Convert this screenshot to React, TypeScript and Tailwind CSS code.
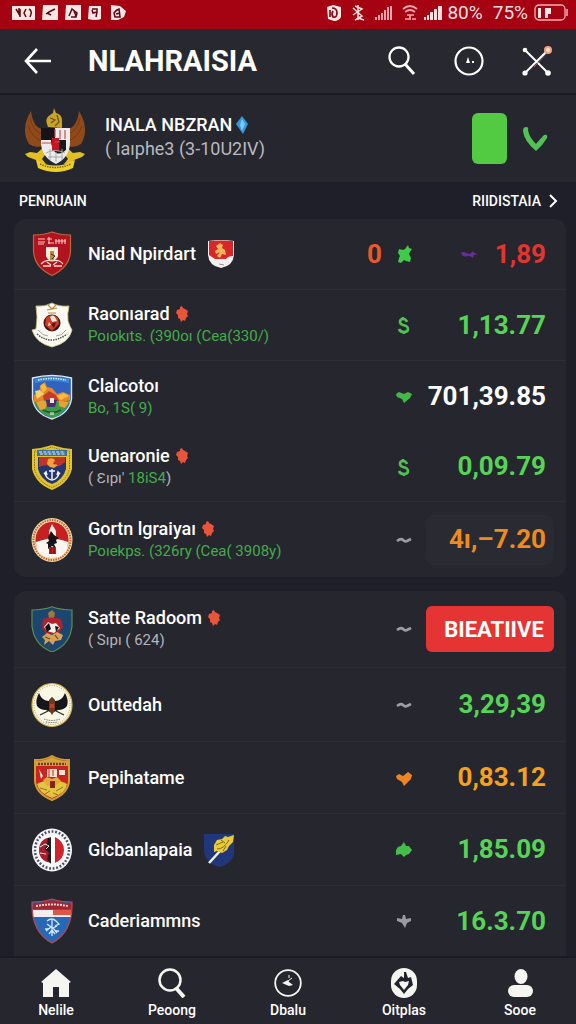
import React from 'react';

type Tone = 'red' | 'green' | 'white' | 'orange' | 'amber';

interface Club {
  name: string;
  crest: React.FC;
  detail?: React.ReactNode;
  pin?: boolean;
  flag?: React.FC;
  count?: string;
  mark: React.FC;
  extra?: React.FC;
  value: string;
  tone: Tone;
  variant?: 'badge' | 'boxed';
  height: string;
}

const tones: Record<Tone, string> = {
  red: 'text-[#e2352f]',
  green: 'text-[#55d455]',
  white: 'text-white',
  orange: 'text-[#f08a1d]',
  amber: 'text-[#f7a11b]',
};

/* ---------- crests ---------- */

const Crest = ({ children }: { children: React.ReactNode }) => (
  <svg viewBox="0 0 42 46" className="h-[46px] w-[42px] shrink-0" aria-hidden="true">
    {children}
  </svg>
);

const RedShield = () => (
  <Crest>
    <path d="M2.500 4Q13 4 21 1Q29 4 39.500 4V20Q39 36 21 44.500Q3 36 2.500 20Z" fill="#b3131f" stroke="#b9683b" strokeWidth="1.200" />
    <path d="M7 8h7M7 11h7M7 13h6M18 6v7M16 8h5M17 12h6M25 8v5M28 8v5M31 8v5M34 8v5M24 10h11" stroke="#f3c9c4" strokeWidth="1.100" />
    <path d="M15 16h12v9q-1 4-6 5q-5-1-6-5z" fill="#f5ecdc" />
    <path d="M19 20h4v9h-4z" fill="#b98a3c" />
    <path d="M20 23l4 2-3 3" stroke="#4c2914" fill="none" />
    <path d="M10 33q5-5 11-3q7-2 11 3M12 35h8M23 35h8M16 31l4 3M26 31l-4 3" fill="none" stroke="#f5dcc9" strokeWidth="1.300" />
  </Crest>
);

const WhiteShield = () => (
  <Crest>
    <path d="M5 4Q14 5 21 1Q28 5 38 4Q36 12 37 19Q39 25 41 28Q38 41 21 45Q5 41 1 28L5 27Q7 15 5 4Z" fill="#fbfaf2" stroke="#d7c77c" strokeWidth=".8" />
    <path d="M17 3l4 4 4-4M16 8l10-2M17 11h8" stroke="#b78b3c" fill="none" strokeWidth="1.200" />
    <circle cx="21" cy="21" r="8.500" fill="#3b1a1e" />
    <path d="M15 16q6-6 12 0l1 6-7 7-7-6z" fill="#d33b25" />
    <path d="M19 15q3-3 5 0l2 4-5 1zM18 20l2 3-3 1z" fill="#f3e9d5" />
    <path d="M20 22l5-2-2 6z" fill="#5a1112" />
    <path d="M6 32q14 12 30 0" fill="none" stroke="#555" strokeWidth="1.500" strokeDasharray="1.500 1" />
    <path d="M7 28q5 6 10 6M35 28q-4 6-10 6" fill="none" stroke="#8c8c86" strokeWidth=".8" />
  </Crest>
);

const LandscapeShield = () => (
  <Crest>
    <path d="M1.500 4Q21-1 40.500 4V25Q38 40 21 45Q4 40 1.500 25Z" fill="#2f63c0" stroke="#dbe7f0" strokeWidth="1.400" />
    <path d="M4 5Q21 1 38 5V9Q21 5 4 9Z" fill="#3c8bd0" />
    <path d="M7 6Q21 3 35 6" stroke="#d7ecff" strokeWidth="1.500" strokeDasharray="1.500 1" fill="none" />
    <path d="M3 21l5-4 2-6 4-3 2 5 5 1 5 6 6-2 7 3v9H3z" fill="#e9832c" />
    <path d="M9 12l4-3 3 6-4 4zM25 22l8-3 5 3-8 4z" fill="#f2bc3f" />
    <path d="M12 22l6-5 7 4 3 6H13z" fill="#c23a2b" />
    <path d="M4 17l5-1 4 4-7 5z" fill="#f4d36c" />
    <path d="M3 28q8-3 18-1t18-1Q36 39 21 44Q7 39 3 28Z" fill="#3f9b47" />
    <path d="M5 28l7-2 5 3-3 6-5 1zM28 27l10 1-4 6-6-2z" fill="#e8a133" />
    <path d="M15 26h11l-2 7h-8z" fill="#452f74" />
    <path d="M19 24h4v5h-4z" fill="#efe6d0" />
    <path d="M12 36q9 5 18 0" stroke="#1c5e2b" strokeWidth="2" fill="none" />
    <path d="M20 38v3M22 38v3" stroke="#fff" strokeWidth="1" />
  </Crest>
);

const GoldShield = () => (
  <Crest>
    <path d="M1 5Q12 4 21 1Q30 4 41 5V25Q37 40 21 46Q5 40 1 25Z" fill="#e2c32c" />
    <path d="M3.500 7Q13 6 21 3Q29 6 38.500 7V25Q35 38 21 43.500Q7 38 3.500 25Z" fill="none" stroke="#87701a" strokeWidth="1" strokeDasharray="1.500 1" />
    <path d="M7 13h28v12Q32 36 21 40Q10 36 7 25Z" fill="#24366f" />
    <path d="M8 13h26v5q-6 6-13 4T8 23z" fill="#c23327" />
    <path d="M6 6h30v6H6z" fill="#3873a8" />
    <path d="M8 8h26M9 10h25" stroke="#e8f0e8" strokeWidth="1" strokeDasharray="3 1.300" />
    <path d="M17 15q5-2 7 1l-2 4 5 1-4 3-4-1-3-3z" fill="#f0a33a" />
    <path d="M21 25v10M18 27h6M14 29q1 6 7 7q6-1 7-7M13 30l2-2 1 3M29 30l-2-2-1 3" stroke="#f4f4f4" strokeWidth="1.500" fill="none" />
  </Crest>
);

const RedRound = () => (
  <Crest>
    <ellipse cx="21" cy="23" rx="20.500" ry="22" fill="#f1d9a4" />
    <ellipse cx="21" cy="23" rx="18.500" ry="20" fill="none" stroke="#c0652d" strokeWidth="2" strokeDasharray="1.500 1" />
    <ellipse cx="21" cy="23" rx="16.500" ry="18" fill="#c71f22" />
    <path d="M5 25q6-2 11-3l5-3 5 3q6 1 11 3q0 16-16 16T5 25z" fill="#fbf7f0" />
    <path d="M21 7l4 7v6h-7v-6z" fill="#f7ede4" />
    <path d="M18 18l2-4 3 4 5 3-3 2 1 3-3 1 2 4-4-2-4 3v-5l-2-1 3-2-1-3z" fill="#15151a" />
    <path d="M18 30h7v7h-7z" fill="#c71f22" />
    <path d="M20 30v7M23 30v7" stroke="#5d0c10" />
  </Crest>
);

const BlueShield = () => (
  <Crest>
    <path d="M1 4Q12 4 21 .8Q30 4 41 4V20Q39 39 21 46Q3 39 1 20Z" fill="#1b4672" stroke="#5f8d44" strokeWidth="1.200" />
    <path d="M21 4l3 3-1 5h-5l-1-5z" fill="#a47836" />
    <path d="M12 13q9-3 18 0l2 8-5 7H15l-4-7z" fill="#b3202c" />
    <path d="M17 16l4 2 4-1 4 5-6 5-7-2-3-4z" fill="#f3eee6" />
    <path d="M18 17l2 6-4 3-2-5zM24 20l4 1-3 5z" fill="#111219" />
    <path d="M11 31l5-4 5 2 5-3 6 3-2 5-6 1-2 4-4-4-5 4 1-5z" fill="#d7a158" />
    <path d="M14 31l5 2M24 29l3 4M19 37l-2 4" stroke="#704522" strokeWidth="1.200" />
  </Crest>
);

const GarudaRound = () => (
  <Crest>
    <ellipse cx="21" cy="23" rx="20" ry="21.500" fill="#faf7e6" stroke="#d2b44f" strokeWidth="1.200" />
    <ellipse cx="21" cy="23" rx="18" ry="19.500" fill="none" stroke="#b59d53" strokeWidth="1" strokeDasharray="1 1.500" />
    <path d="M8 11q3 8 10 8l3-4 3 4q7 0 10-8q4 7 2 13q-3 4-9 4l-6 3-6-3q-6 0-9-4q-2-6 2-13z" fill="#17161b" />
    <path d="M18 18l3-3 3 3v10l-3 5-3-5z" fill="#6f3a1c" />
    <path d="M19 22h4v4h-4z" fill="#c83b26" />
    <path d="M9 33l8-4M33 33l-8-4" stroke="#2b2925" strokeWidth="1.300" fill="none" />
    <path d="M13 37q8 3 16 0M15 40q6 1 12 0" stroke="#6e6a58" fill="none" strokeDasharray="1 .7" />
  </Crest>
);

const RedGoldShield = () => (
  <Crest>
    <path d="M4 5Q14 5 21 1Q28 5 38 5V25Q38 38 21 45Q4 38 4 25Z" fill="#c92420" stroke="#cf9c35" strokeWidth="2" />
    <path d="M5 6Q14 6 21 2Q28 6 37 6V11H5Z" fill="#d5a23c" />
    <path d="M7 9h28" stroke="#6c431c" strokeWidth="2.500" strokeDasharray="2 1" />
    <path d="M8 14l4 7-2 3zM16 14h10v8H16zM28 15h6v5h-6z" fill="#f4e3d0" />
    <path d="M18 14v8M22 15v6" stroke="#bf2620" />
    <path d="M6 29q15-8 30 0q-1 9-15 14Q8 38 6 29z" fill="#e2c541" />
    <path d="M12 25l4-3 5 2 5-2 4 4-6 5H16z" fill="#e8a83a" />
    <path d="M19 26h5v7h-5z" fill="#7e2a17" />
    <path d="M9 33l7 2M32 32l-7 4M14 39l5-3M22 38l5 2" stroke="#967222" />
  </Crest>
);

const StripeRound = () => (
  <Crest>
    <ellipse cx="21" cy="23" rx="20" ry="21.500" fill="#f6f5f6" />
    <ellipse cx="21" cy="23" rx="17" ry="18.500" fill="none" stroke="#4a4d6c" strokeWidth="2.500" strokeDasharray="1.800 1.800" />
    <ellipse cx="21" cy="23" rx="13.500" ry="14.500" fill="#fff" />
    <path d="M20 10v26Q8 34 8 23T20 10z" fill="#a51d29" />
    <path d="M17 11h3v26l-4-5 2-6-4-4 2-5z" fill="#1d1a20" />
    <path d="M9 20l5-3 4 2-3 3M9 26l6 1" stroke="#eee" fill="none" />
    <path d="M24 10q9 4 9 13T24 36z" fill="#cf242d" />
  </Crest>
);

const BannerShield = () => (
  <Crest>
    <path d="M1 4Q13 4 21 1Q29 4 41 4Q42 34 21 45Q0 34 1 4Z" fill="#2769b8" stroke="#b9474b" strokeWidth="1.200" />
    <path d="M2 5Q13 5 21 2Q29 5 40 5V11H2Z" fill="#9e2732" />
    <path d="M5 8Q21 5 37 8" stroke="#f1d4cf" strokeWidth="2" strokeDasharray="2 1" fill="none" />
    <path d="M2 12h38l-.5 7H2.500z" fill="#f6eeee" />
    <path d="M22 12h18v5H22z" fill="#df5648" />
    <path d="M16 23q5-4 9 0l3 3-4 2M21 22v16M16 26l4 3-5 4M26 28l-4 2 4 5M18 36l3-4 3 4M14 31h4M24 33h4" stroke="#d4e9ff" strokeWidth="1.300" fill="none" />
  </Crest>
);

const NationalCrest = () => (
  <svg viewBox="0 0 62 66" className="h-[66px] w-[62px] shrink-0" aria-hidden="true">
    <path d="M7 5Q9 21 18 23L22 38Q14 44 5 38Q-4 23 7 5ZM55 5Q53 21 44 23L40 38Q48 44 57 38Q66 23 55 5Z" fill="#8f4a1c" />
    <path d="M6 12q3 14 13 16M4 20q5 13 15 15M56 12q-3 14-13 16M58 20q-5 13-15 15" fill="none" stroke="#76390f" strokeWidth="1" />
    <path d="M24 21q-4-9 2-12l3-2 1-5 2 5q6 1 6 8v7z" fill="#c8a32c" />
    <path d="M26 12l5 2-4 3M33 9l2 7-4 4" fill="none" stroke="#715514" strokeWidth="1.300" />
    <path d="M1 48l5-2 7 1 8-7 3 5-6 8 4 5-6 3-4-7-8-3zM61 48l-5-2-7 1-8-7-3 5 6 8-4 5 6 3 4-7 8-3z" fill="#e1bf24" />
    <path d="M17 22h29v14q0 15-14 22Q17 51 17 36z" fill="#ececec" />
    <path d="M17 22h14v12H17z" fill="#15141a" />
    <path d="M27 34h15v10q-5 5-10 3-5-4-5-13z" fill="#1a191e" />
    <path d="M28 32h7v13h-7z" fill="#c31623" />
    <path d="M31 23v8M36 24v9M41 24v9M18 37h9M31 36h5" stroke="#c74b50" strokeWidth="1.200" />
    <path d="M22 47q9-5 19 0M24 51h15M32 46v10M26 43v11M38 43v11" stroke="#aaa" fill="none" />
    <path d="M12 54q19 11 39 0l-2 8q-17 8-35 0z" fill="#efcf2c" />
    <path d="M16 58q15 7 31 0" stroke="#806618" strokeWidth="1.500" strokeDasharray="1.500 1" fill="none" />
  </svg>
);

/* ---------- small marks ---------- */

const Pin = () => (
  <svg viewBox="0 0 12 16" className="h-4 w-3 shrink-0" aria-hidden="true">
    <path d="M4 1l2-1 1 2 2 1 3 2-1 3 1 2-2 2-1 3-2-1-2 2-1-3-2-1V9L0 7l1-3 3-1z" fill="#e9553a" />
  </svg>
);

const MiniFlag = () => (
  <svg viewBox="0 0 26 28" className="h-7 w-[26px] shrink-0" aria-hidden="true">
    <path d="M0 1q13-2 26 0v14q-1 11-13 13Q1 26 0 15z" fill="#f5f1ef" />
    <path d="M1 1q12-1 24 0v15q-5 0-7 3H7l-6-4z" fill="#d9262b" />
    <path d="M12 3l3 2-1 3 3 2 1 5-4-1-2 4-3-2 3-4-4 2-1-3 3-2-2-3z" fill="#efb45c" />
    <path d="M11 24l5 1" stroke="#a88" />
  </svg>
);

const FeatherFlag = () => (
  <svg viewBox="0 0 30 34" className="h-[34px] w-[30px] shrink-0" aria-hidden="true">
    <path d="M0 1h30v20q-2 9-14 13Q1 30 0 18z" fill="#20377c" />
    <path d="M5 30L16 18" stroke="#f3f3ee" strokeWidth="2.500" />
    <path d="M10 12l3-5 5-1 3-3 3 1 6-2-1 7-4 4-2 4-5 3-5-2-3 1z" fill="#e9cb35" />
    <path d="M12 12l7-3M13 16q7 0 12-9M19 18l3-5M17 7l4 3" stroke="#806c22" fill="none" />
  </svg>
);

const Mark = ({ children }: { children: React.ReactNode }) => (
  <svg viewBox="0 0 20 20" className="h-5 w-5 shrink-0" aria-hidden="true">
    {children}
  </svg>
);

const Burst = () => (
  <Mark><path d="M5 5l4 1 2-1 3-4 1 3 3 1-2 3-1 2 2 4-1 4-4-1-2-1-3 3-3-1 1-4 1-2-2-3z" fill="#3fca48" /></Mark>
);
const Dollar = () => (
  <Mark><path d="M13 7q-1-3-4-3q-3 0-3 3q0 2 3 3q5 1 5 4q0 3-4 3q-4 0-5-3M9 2v2M10 17v2" fill="none" stroke="#4fc24f" strokeWidth="2.600" /></Mark>
);
const Heart = () => (
  <Mark><path d="M2 7l3-2 5 2 4-2 4 2-2 4-6 5-2-4-5-2z" fill="#42b84a" /></Mark>
);
const OrangeHeart = () => (
  <Mark><path d="M2 8l3-2 4 2 5-4 4 3-1 4-7 7-2-4-5-3z" fill="#ec8524" /></Mark>
);
const Clover = () => (
  <Mark><path d="M7 6l3-4 2 4 3 0 3 4-3 4-3 1-2 2-3-3-5 1v-5l2-3z" fill="#45bd4b" /></Mark>
);
const Plus = () => (
  <Mark><path d="M9 4h2l1 4 5-1v3l-4 2-2 5-3-5-5-2V7l5 1z" fill="#9a9aa0" /></Mark>
);
const Wave = () => (
  <Mark><path d="M3 11q4-3 6-1t4 1l4-2" fill="none" stroke="#9c9ca3" strokeWidth="2.600" /></Mark>
);
const PurpleBar = () => (
  <Mark><path d="M2 9q3-2 5 0l4 1 3-3 1 2 4 1-4 1-1 3-3-2H8q-4 2-6-3z" fill="#6a2c9c" /></Mark>
);

/* ---------- data ---------- */

const groups: Club[][] = [
  [
    { name: 'Niad Npirdart', crest: RedShield, flag: MiniFlag, count: '0', mark: Burst, extra: PurpleBar, value: '1,89', tone: 'red', height: 'min-h-[71px]' },
    { name: 'Raonıarad', crest: WhiteShield, pin: true, detail: 'Poıokıts. (390oı (Cea(330/)', mark: Dollar, value: '1,13.77', tone: 'green', height: 'min-h-[71px]' },
    { name: 'Clalcotoı', crest: LandscapeShield, detail: 'Bo, 1S( 9)', mark: Heart, value: '701,39.85', tone: 'white', height: 'min-h-[71px]' },
    {
      name: 'Uenaronie', crest: GoldShield, pin: true,
      detail: <><span className="text-[#b4b4ba]">( Ɛıpı&apos;</span> 18iS4<span className="text-[#b4b4ba]">)</span></>,
      mark: Dollar, value: '0,09.79', tone: 'green', height: 'min-h-[70px]',
    },
    { name: 'Gortn lgraiyaı', crest: RedRound, pin: true, detail: 'Poıekps. (326ry (Cea( 3908y)', mark: Wave, value: '4ı,–7.20', tone: 'orange', variant: 'boxed', height: 'min-h-[75px]' },
  ],
  [
    {
      name: 'Satte Radoom', crest: BlueShield, pin: true,
      detail: <span className="text-[#b4b4ba]">( Sıpı ( 624)</span>,
      mark: Wave, value: 'BIEATIIVE', tone: 'white', variant: 'badge', height: 'min-h-[77px]',
    },
    { name: 'Outtedah', crest: GarudaRound, mark: Wave, value: '3,29,39', tone: 'green', height: 'min-h-[74px]' },
    { name: 'Pepihatame', crest: RedGoldShield, mark: OrangeHeart, value: '0,83.12', tone: 'amber', height: 'min-h-[72px]' },
    { name: 'Glcbanlapaia', crest: StripeRound, flag: FeatherFlag, mark: Clover, value: '1,85.09', tone: 'green', height: 'min-h-[72px]' },
    { name: 'Caderiammns', crest: BannerShield, mark: Plus, value: '16.3.70', tone: 'green', height: 'min-h-[70px]' },
  ],
];

const ClubRow = ({ club }: { club: Club }) => {
  const { crest: ClubCrest, flag: Flag, mark: MarkIcon, extra: Extra } = club;
  return (
    <li className={`flex items-center pl-[17px] pr-3 ${club.height}`}>
      <ClubCrest />
      <div className={`ml-[15px] min-w-0 flex-1 whitespace-nowrap ${club.detail ? 'pb-0.5' : ''}`}>
        <div className="flex items-center">
          <span className="text-lg font-medium leading-6 text-white">{club.name}</span>
          {club.pin && <span className="ml-1.5"><Pin /></span>}
          {Flag && <span className="ml-3"><Flag /></span>}
        </div>
        {club.detail && <p className="text-[15px] leading-5 text-[#43ad4a]">{club.detail}</p>}
      </div>
      {club.count && <span className="mr-3 text-[26px] font-bold leading-8 text-[#ea5a26]">{club.count}</span>}
      <MarkIcon />
      {club.variant === 'badge' ? (
        <button className="ml-3 h-[46px] w-32 rounded-md bg-[#e53434] pl-2 text-[22px] font-bold text-white">{club.value}</button>
      ) : (
        <div
          className={`ml-3 flex w-32 items-center justify-end gap-4 rounded-lg pr-2 text-[26px] font-bold ${tones[club.tone]} ${
            club.variant === 'boxed' ? 'h-[50px] bg-[#2a2a32]' : ''
          }`}
        >
          {Extra && <Extra />}
          <span>{club.value}</span>
        </div>
      )}
    </li>
  );
};

/* ---------- status bar ---------- */

const StatusBar = () => (
  <div className="flex h-[29px] items-center justify-between bg-[#a50311] pb-1 pl-3 pr-2 text-[#f9dfe0]">
    <svg viewBox="0 0 116 18" className="h-[18px] w-[116px]" aria-hidden="true">
      <path d="M0 2h23v14H0zM31 1h15v15H30zM54 1h15v15H53zM77 2h12v13q-5 2-13 0zM99 1l9 1 6 5-2 6-6 3H99z" fill="#fbe6e6" />
      <path d="M4 5l3 5V4M8 5v8M14 5l-2 4 2 4M17 5q4 2 1 8M34 10l3-2 6-3M35 9l4 2M57 12l3-7 5 4-1 4h-5M62 7l2 5M80 5h5v3l-4 1-1-3M85 8l-1 5M102 9q2-3 5-4l1 8h-5zM104 10l4-1" fill="none" stroke="#5e0710" strokeWidth="1.500" />
    </svg>
    <div className="flex items-center">
      <svg viewBox="0 0 118 18" className="mr-1 h-[18px] w-[118px]" aria-hidden="true">
        <path d="M2 3l6-2 8 2v10q-2 4-7 4l-6-2z" fill="#fbe6e6" />
        <path d="M7 4q5 0 5 5t-4 4q-2-3 0-6M5 6v7" stroke="#8d0610" strokeWidth="1.700" fill="none" />
        <path d="M33 1v15M28 4l9 8-7 4M28 11l9-6-7-3M33 14l6 2" stroke="#fbdfe0" strokeWidth="1.500" fill="none" />
        <path d="M51 13v3M54 11v5M57 9v7M60 6v10M63 3v13M66 2v14" stroke="#f4bfc2" strokeWidth="1.700" />
        <path d="M78 5q7-6 14 0M80 8q5-4 10 0M82 11h7M85 11v5M80 15h4M87 15h4" stroke="#efa6aa" strokeWidth="1.700" fill="none" />
        <path d="M99 16V13h2v3zM102 16v-5h2v5zM105 16V8h3v8zM109 16V5h3v11zM113 16V2h4v14z" fill="#fbdfe0" />
      </svg>
      <span className="text-[19px] leading-6">80%</span>
      <span className="ml-2.5 text-[19px] leading-6">75%</span>
      <svg viewBox="0 0 34 17" className="ml-1.5 h-[17px] w-[34px]" aria-hidden="true">
        <rect x="1" y="1" width="30" height="15" rx="4" fill="none" stroke="#f3b1b4" strokeWidth="1.300" />
        <path d="M33 5v7" stroke="#f3b1b4" strokeWidth="1.500" />
        <path d="M4 4h3v10H4zM11 4h6v6h-3v4h-3z" fill="#fbe6e6" />
      </svg>
    </div>
  </div>
);

/* ---------- bottom navigation ---------- */

const navItems = [
  {
    label: 'Nelile',
    icon: <path d="M15 1L30 14l-2 1v14H18V19h-6v10H2V15l-2-1z" fill="#f5f5f2" />,
  },
  {
    label: 'Peoong',
    icon: (
      <>
        <circle cx="13" cy="12" r="10.500" fill="none" stroke="#f5f5f2" strokeWidth="2.500" />
        <path d="M19 20l8 9" stroke="#f5f5f2" strokeWidth="4" />
      </>
    ),
  },
  {
    label: 'Dbalu',
    icon: (
      <>
        <circle cx="15" cy="15" r="12.800" fill="none" stroke="#f5f5f2" strokeWidth="1.800" />
        <path d="M16 7v3M19 10l-4 3" fill="none" stroke="#f5f5f2" strokeWidth="1" />
        <path d="M9 15l6-3 1 2 4 3-4 1z" fill="#f5f5f2" />
      </>
    ),
  },
  {
    label: 'Oitplas',
    icon: (
      <>
        <rect x="2" y="0" width="26" height="30" rx="13" fill="#f5f5f2" />
        <path d="M15 4v6l-3-2-7 8 6 5 4 5 4-5 5-4-2-8-3 1-2-6zM10 14l4-1 2 1 4-1-1 4-4 5-4-5z" fill="#22222a" fillRule="evenodd" />
      </>
    ),
  },
  {
    label: 'Sooe',
    icon: (
      <>
        <ellipse cx="16" cy="8.500" rx="6.500" ry="7.500" fill="#f5f5f2" />
        <rect x="3" y="17" width="25" height="12" rx="6" fill="#f5f5f2" />
      </>
    ),
  },
];

const App: React.FC = () => {
  return (
    <div className="flex min-h-screen flex-col bg-[#1f1f29] font-['Roboto',sans-serif] text-white">
      <StatusBar />

      {/* Title bar */}
      <header className="flex h-[66px] items-center border-b-2 border-[#1a1a22] bg-[#282830] pl-6 pr-6">
        <button aria-label="Back">
          <svg viewBox="0 0 28 26" className="h-[26px] w-7">
            <path d="M27 13H3M13 1L2 13l11 12" fill="none" stroke="#fff" strokeWidth="2.600" />
          </svg>
        </button>
        <h1 className="ml-9 flex-1 text-[29px] font-bold leading-10">NLAHRAISIA</h1>
        <div className="flex items-center gap-[38px]">
          <button aria-label="Search">
            <svg viewBox="0 0 28 30" className="h-[30px] w-7">
              <circle cx="11" cy="11" r="9.500" fill="none" stroke="#fff" strokeWidth="2.300" />
              <path d="M17 18l9 10" stroke="#fff" strokeWidth="3" />
            </svg>
          </button>
          <button aria-label="Activity">
            <svg viewBox="0 0 30 30" className="h-[30px] w-[30px]">
              <circle cx="15" cy="15" r="13.500" fill="none" stroke="#fff" strokeWidth="2.200" />
              <path d="M14 11l2 6h-4zM18 15h2v2h-2z" fill="#fff" />
            </svg>
          </button>
          <button aria-label="Tools">
            <svg viewBox="0 0 30 30" className="h-[30px] w-[30px]">
              <path d="M3 4l23 23M25 5L3 27" stroke="#fff" strokeWidth="2" />
              <path d="M12 21L24 8" stroke="#8a6a62" strokeWidth="1" />
              <circle cx="3" cy="4" r="2.300" fill="#fff" />
              <circle cx="3" cy="27" r="2.600" fill="#fff" />
              <circle cx="26" cy="27" r="2.800" fill="#fff" />
              <circle cx="26" cy="4" r="4" fill="#f6a27c" />
              <circle cx="26" cy="4" r="2" fill="#ffe3d2" />
            </svg>
          </button>
        </div>
      </header>

      {/* Profile */}
      <section className="flex h-[87px] items-center bg-[#26262f] pl-6 pr-7">
        <NationalCrest />
        <div className="ml-[19px] flex-1 whitespace-nowrap pb-1">
          <div className="flex items-center gap-1">
            <h2 className="text-lg font-medium leading-6">INALA NBZRAN</h2>
            <svg viewBox="0 0 12 18" className="h-[18px] w-3" aria-hidden="true">
              <path d="M6 0l6 8-5 10L0 8z" fill="#3597dc" />
              <path d="M6 3l3 5-3 7-2-6z" fill="#7cc8f5" />
            </svg>
          </div>
          <p className="text-lg leading-6 text-[#b9b9bf]">( Iaıphe3 (3-10U2IV)</p>
        </div>
        <button aria-label="Status" className="h-[51px] w-[35px] rounded-md bg-[#52cb43]" />
        <button aria-label="Expand" className="ml-4">
          <svg viewBox="0 0 25 25" className="h-[25px] w-[25px]">
            <path d="M3 1q3 0 2 3q1 7 8 14q4-5 8-9q4-1 3 3q-4 7-11 13Q1 15 0 5q0-4 3-4z" fill="#52c257" />
          </svg>
        </button>
      </section>

      <div className="flex h-[37px] items-center justify-between pl-[19px] pr-[18px] text-sm font-medium">
        <h3>PENRUAIN</h3>
        <a href="#all" className="flex items-center gap-2">
          RIIDISTAIA
          <svg viewBox="0 0 9 14" className="h-[14px] w-[9px]" aria-hidden="true">
            <path d="M1 1l6 6-6 6" fill="none" stroke="#fff" strokeWidth="2" />
          </svg>
        </a>
      </div>

      {/* Clubs */}
      <main className="flex flex-1 flex-col gap-[14px] pl-[14px] pr-[10px]">
        {groups.map((clubs, i) => (
          <ul
            key={i}
            className={`divide-y divide-[#2e2e37] bg-[#26262f] ${
              i === 0 ? 'rounded-xl [&>li:nth-child(3)]:border-b-0' : 'flex-1 rounded-t-xl'
            }`}
          >
            {clubs.map((club) => (
              <ClubRow key={club.name} club={club} />
            ))}
          </ul>
        ))}
      </main>

      <nav className="flex h-[68px] justify-between border-t-2 border-[#1a1a22] bg-[#26262f] px-6 pt-2.5">
        {navItems.map((item) => (
          <a key={item.label} href={`#${item.label.toLowerCase()}`} className="flex w-16 flex-col items-center">
            <svg viewBox="0 0 30 30" className="h-[30px] w-[30px]" aria-hidden="true">
              {item.icon}
            </svg>
            <span className="text-sm font-medium leading-6">{item.label}</span>
          </a>
        ))}
      </nav>
    </div>
  );
};

export default App;
